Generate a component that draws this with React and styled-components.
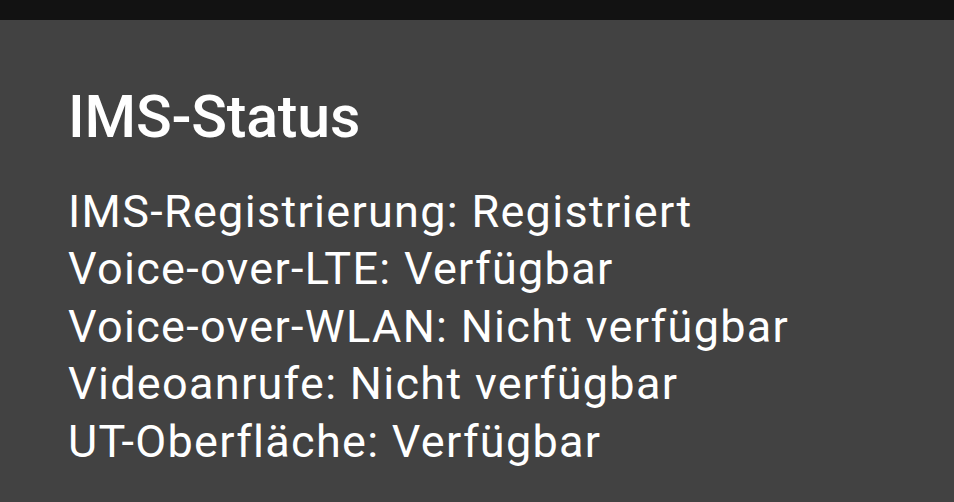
import React from 'react';
import styled, { createGlobalStyle } from 'styled-components';

const GlobalStyle = createGlobalStyle`
  html, body {
    margin: 0;
    padding: 0;
    background: #424242;
    font-family: Roboto, "Noto Sans", sans-serif;
  }
`

const Screen = styled.div`
  width: 954px;
  height: 502px;
  display: flex;
  flex-direction: column;
  background: #424242;
  overflow: hidden;
`

const StatusBar = styled.div`
  height: 20px;
  flex-shrink: 0;
  background: #121212;
`

const Dialog = styled.div`
  padding: 67px 68px 0;
  display: flex;
  flex-direction: column;
`

const Title = styled.h1`
  margin: 0;
  font-size: 59px;
  font-weight: 500;
  line-height: 60px;
  letter-spacing: -0.2px;
  color: #fff;
`

const Lines = styled.div`
  margin-top: 36px;
  display: flex;
  flex-direction: column;
`

const Line = styled.div`
  font-size: 45px;
  line-height: 57.4px;
  letter-spacing: 1.3px;
  color: #fff;
  white-space: nowrap;
`

const rows = [
  'IMS-Registrierung: Registriert',
  'Voice-over-LTE: Verfügbar',
  'Voice-over-WLAN: Nicht verfügbar',
  'Videoanrufe: Nicht verfügbar',
  'UT-Oberfläche: Verfügbar',
]

const App = () => {
  return (
    <>
      <GlobalStyle />
      <Screen>
        <StatusBar />
        <Dialog>
          <Title>IMS-Status</Title>
          <Lines>
            {rows.map((text, key) => (
              <Line key={key}>{text}</Line>
            ))}
          </Lines>
        </Dialog>
      </Screen>
    </>
  );
};

export default App;
